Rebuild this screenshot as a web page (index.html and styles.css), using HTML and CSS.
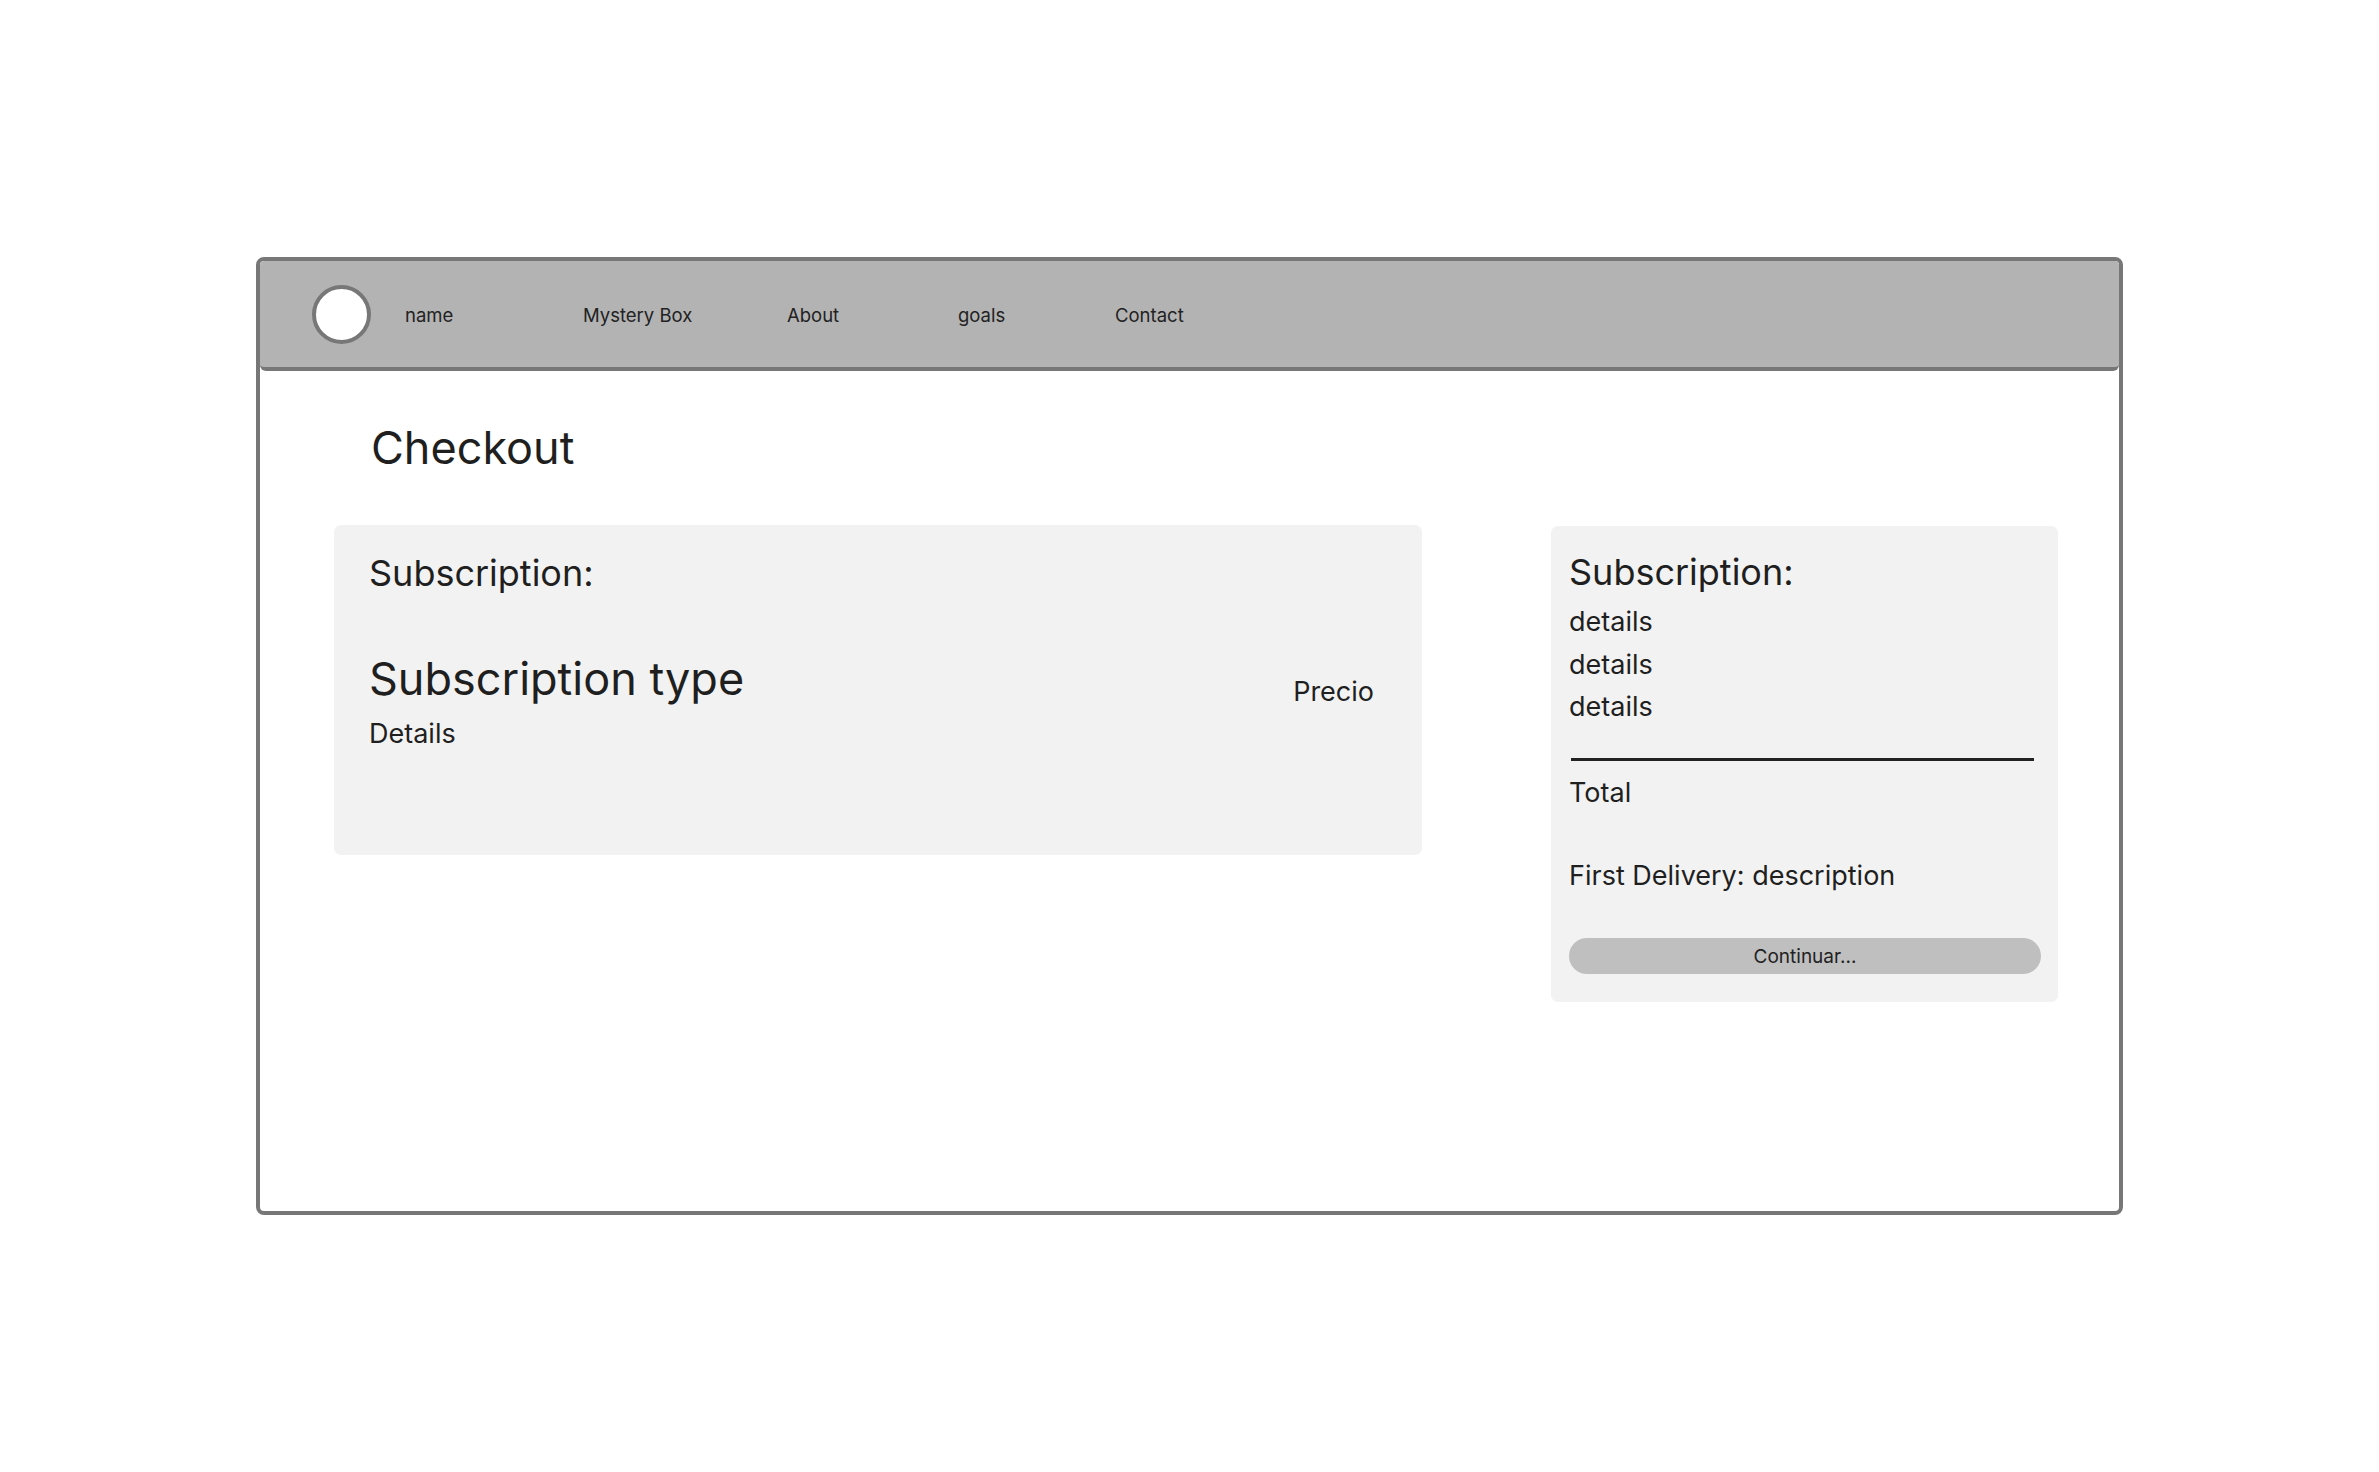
FILE: index.html
```html
<!DOCTYPE html>
<html lang="en">
<head>
<meta charset="utf-8">
<title>Checkout</title>
<link rel="stylesheet" href="styles.css">
</head>
<body>
<div class="frame">
  <nav class="nav">
    <div class="logo"></div>
    <a class="link link-name">name</a>
    <a class="link link-box">Mystery Box</a>
    <a class="link link-about">About</a>
    <a class="link link-goals">goals</a>
    <a class="link link-contact">Contact</a>
  </nav>
  <main class="main">
    <h1 class="title">Checkout</h1>
    <div class="cards">
      <section class="card card-main">
        <h2 class="card-heading">Subscription:</h2>
        <div class="sub-row">
          <div class="sub-info">
            <div class="sub-type">Subscription type</div>
            <div class="sub-details">Details</div>
          </div>
          <div class="sub-price">Precio</div>
        </div>
      </section>
      <aside class="card card-summary">
        <h2 class="card-heading">Subscription:</h2>
        <ul class="detail-list">
          <li>details</li>
          <li>details</li>
          <li>details</li>
        </ul>
        <hr class="divider">
        <div class="total">Total</div>
        <div class="delivery">First Delivery: description</div>
        <button class="continue">Continuar...</button>
      </aside>
    </div>
  </main>
</div>
</body>
</html>
```
FILE: styles.css
```css
* { box-sizing: border-box; }
html, body { margin: 0; padding: 0; background: #ffffff; }
body {
  font-family: Inter, "Noto Sans", "Liberation Sans", sans-serif;
  color: #1f1f1f;
}
.frame {
  margin: 257px 0 0 256px;
  width: 1867px;
  height: 958px;
  border: 4px solid #777777;
  border-radius: 8px;
  overflow: hidden;
  background: #ffffff;
}
.nav {
  height: 110px;
  background: #b3b3b3;
  border-bottom: 4px solid #777777;
  border-radius: 4px 4px 6px 6px;
  display: flex;
  align-items: center;
  padding-left: 52px;
  padding-top: 2px;
}
.logo {
  width: 59px;
  height: 59px;
  border-radius: 50%;
  border: 4px solid #777777;
  background: #ffffff;
  flex: none;
  margin-right: 34px;
  margin-top: -2px;
}
.link {
  font-size: 18.5px;
  line-height: 24px;
  color: #222222;
  text-decoration: none;
  flex: none;
}
.link-name { width: 178px; }
.link-box { width: 204px; }
.link-about { width: 171px; }
.link-goals { width: 157px; }
.main {
  padding: 0 61px 0 74px;
}
.title {
  margin: 51px 0 0 37px;
  font-size: 45px;
  line-height: 52px;
  font-weight: 400;
}
.cards {
  margin-top: 51px;
  display: flex;
  align-items: flex-start;
  gap: 129px;
}
.card {
  background: #f2f2f2;
  border-radius: 7px;
}
.card-main {
  width: 1088px;
  height: 330px;
  padding: 26px 48px 0 35px;
}
.card-heading {
  margin: 0;
  font-size: 36px;
  line-height: 45px;
  font-weight: 400;
}
.sub-row {
  margin-top: 56px;
  display: flex;
  justify-content: space-between;
  align-items: flex-start;
}
.sub-type {
  font-size: 45px;
  line-height: 53px;
}
.sub-details {
  margin-top: 12px;
  font-size: 27px;
  line-height: 33px;
}
.sub-price {
  margin-top: 24px;
  font-size: 27px;
  line-height: 32px;
}
.card-summary {
  margin-top: 1px;
  width: 507px;
  height: 476px;
  padding: 24px 17px 0 18px;
  display: flex;
  flex-direction: column;
}
.detail-list {
  list-style: none;
  margin: 6px 0 0 0;
  padding: 0;
  font-size: 27px;
  line-height: 42.5px;
}
.divider {
  margin: 29px 7px 0 2px;
  border: none;
  height: 3px;
  background: #222222;
}
.total {
  margin-top: 15px;
  font-size: 27px;
  line-height: 33px;
}
.delivery {
  margin-top: 50px;
  font-size: 27px;
  line-height: 33px;
}
.continue {
  margin-top: 46px;
  height: 36px;
  width: 100%;
  border: none;
  border-radius: 18px;
  background: #bfbfbf;
  color: #222222;
  font-family: Inter, "Noto Sans", "Liberation Sans", sans-serif;
  font-size: 19px;
  padding: 2px 0 0 0;
  display: flex;
  align-items: center;
  justify-content: center;
}
```
